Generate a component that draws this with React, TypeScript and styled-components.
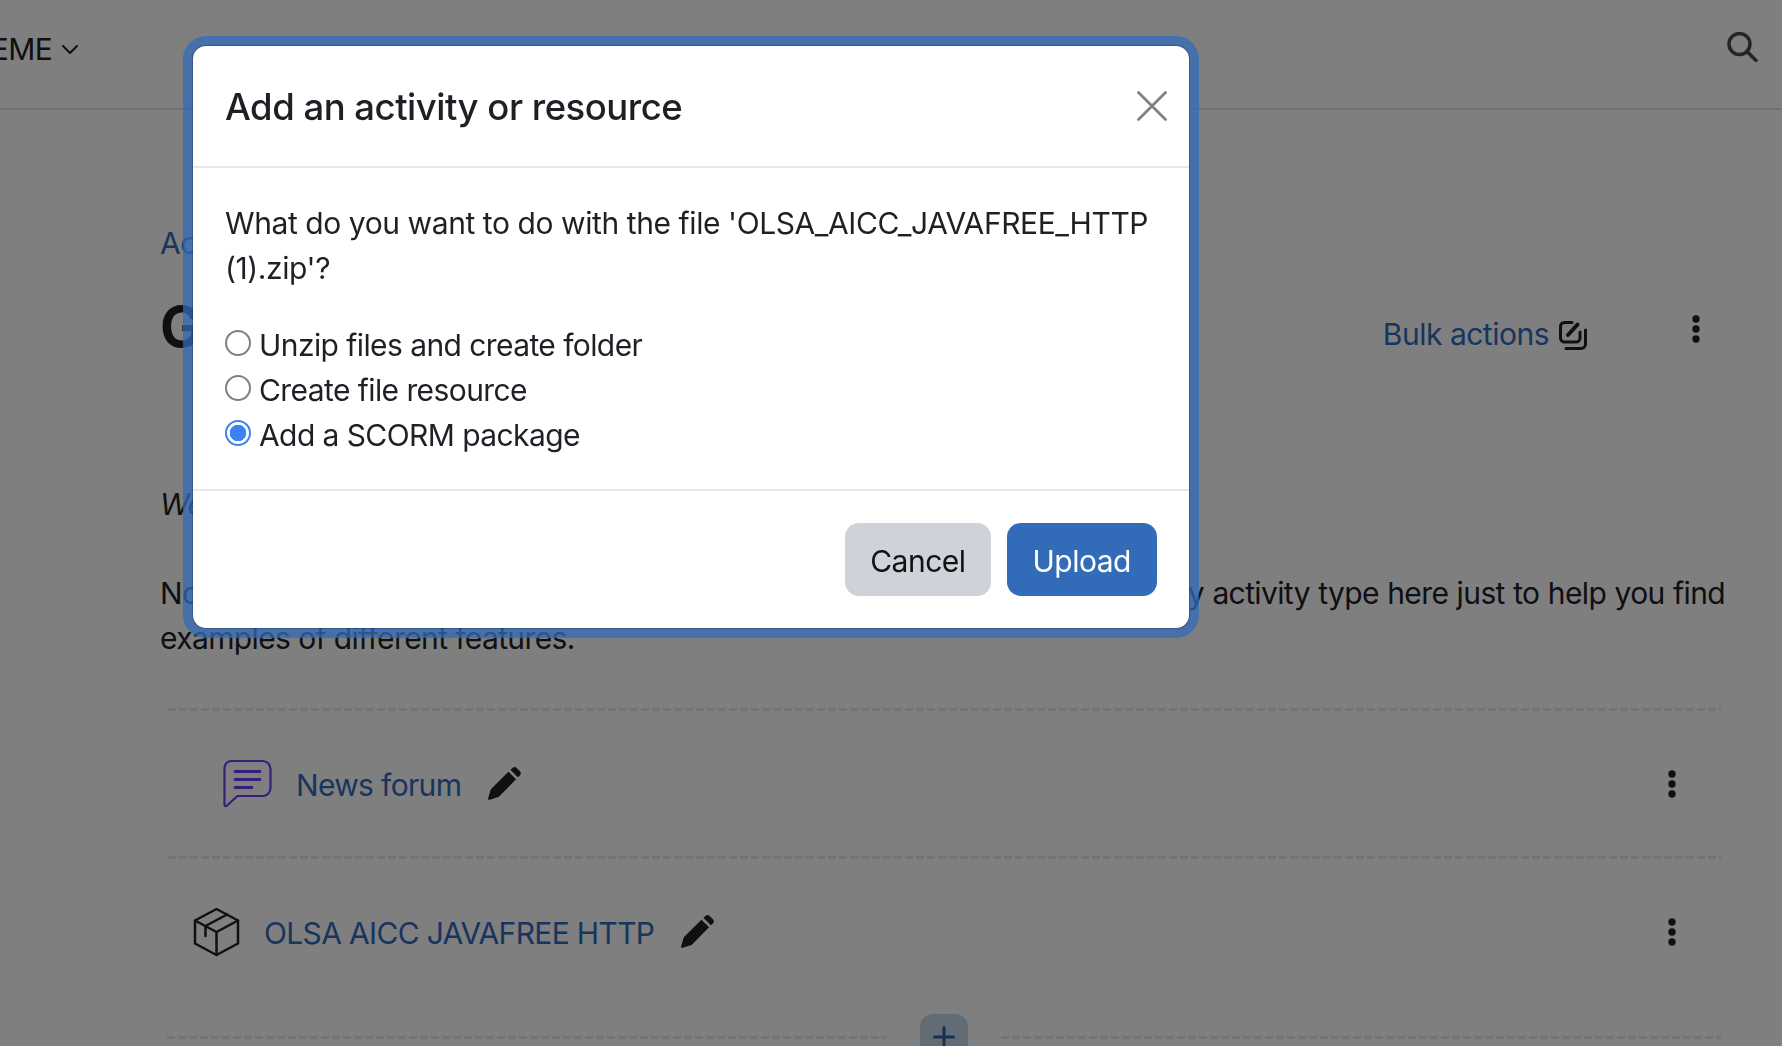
import { createGlobalStyle, styled } from "styled-components";

const GlobalStyle = createGlobalStyle`
  html, body {
    margin: 0;
    height: 1046px;
    overflow: hidden;
    background: #fff;
    font-family: Inter, "Liberation Sans", sans-serif;
    font-size: 30px;
    line-height: 45px;
    letter-spacing: -0.5px;
    color: #1d2125;
  }
`;

const linkColor = "#2f6bbd";

const options = [
  { id: "unzip", label: "Unzip files and create folder" },
  { id: "file", label: "Create file resource" },
  { id: "scorm", label: "Add a SCORM package", checked: true },
];

const KebabIcon = () => (
  <svg width="8" height="28" viewBox="0 0 8 28" fill="#1d2125">
    <circle cx="4" cy="4" r="3.7" />
    <circle cx="4" cy="14" r="3.7" />
    <circle cx="4" cy="24" r="3.7" />
  </svg>
);

const PencilIcon = () => (
  <svg width="34" height="34" viewBox="0 0 24 24" fill="#1d2125">
    <path d="M1 23c-.3-.2-.3-.5-.2-1l1.900-6.300L15.100 3.300l5.400 5.400L8.200 21.100 1.900 23.100c-.4.100-.7.100-.9-.1z" />
    <path d="M16.500 2 17.800.8a2.400 2.400 0 0 1 3.300 0l2 2a2.400 2.400 0 0 1 0 3.300L21.800 7.300z" />
  </svg>
);

const ForumIcon = () => (
  <svg width="49" height="49" viewBox="0 0 49 49" fill="none" stroke="#6f3df0" strokeWidth="2.200" strokeLinecap="round" strokeLinejoin="round">
    <path d="M1.500 9a7 7 0 0 1 7-7h31a8 8 0 0 1 8 8v19a8 8 0 0 1-8 8H14.500L3.500 47c-1 .6-2 0-2-1.200z" />
    <path d="M12 12.500h25M12 20.500h25M12 28.500h17" strokeWidth="2.800" />
  </svg>
);

const PackageIcon = () => (
  <svg width="47" height="50" viewBox="0 0 47 50" fill="none" stroke="#1d2125" strokeWidth="2.500" strokeLinecap="round" strokeLinejoin="round">
    <path d="M23.500 2 45 13.500v23L23.500 48 2 36.500v-23z" />
    <path d="M2 13.500 23.500 25 45 13.500M23.500 25v23" />
    <path d="M34 7.500 12.500 19v10" />
  </svg>
);

const BulkIcon = () => (
  <svg width="30" height="30" viewBox="0 0 30 30" fill="none" stroke="#1d2125" strokeWidth="3" strokeLinecap="round" strokeLinejoin="round">
    <path d="M14 2.500H6.500a4 4 0 0 0-4 4V18a4 4 0 0 0 4 4H18a4 4 0 0 0 4-4v-6" />
    <path d="M27.500 10v14a4.500 4.500 0 0 1-4.500 4.500H8" />
    <path d="M10 15 19.500 4.500" strokeWidth="4" />
  </svg>
);

const App = () => {
  return (
    <>
      <GlobalStyle />
      <Page>
        <Navbar>
          <ThemeMenu>
            THEME
            <svg width="16" height="9" viewBox="0 0 16 9" fill="none" stroke="#1d2125" strokeWidth="2" strokeLinecap="round" strokeLinejoin="round">
              <path d="M1 1l7 7 7-7" />
            </svg>
          </ThemeMenu>
          <svg width="31" height="30" viewBox="0 0 31 30" fill="none" stroke="#4a4a4a" strokeWidth="3.500" strokeLinecap="round">
            <circle cx="12.500" cy="12" r="10.500" />
            <path d="M20.500 20l8.500 8.500" />
          </svg>
        </Navbar>
        <Content>
          <Breadcrumb>Activities</Breadcrumb>
          <HeadingRow>
            <Heading>General</Heading>
            <BulkLink>
              Bulk actions
              <BulkIcon />
            </BulkLink>
            <HeadingKebab>
              <KebabIcon />
            </HeadingKebab>
          </HeadingRow>
          <Welcome>Welcome to the course and thanks for joining us.</Welcome>
          <Intro>
            Note that this course is only a sample for teachers and so we have put every activity type here just to help you find
            examples of different features.
          </Intro>
          <ActivityList>
            <DashedLine />
            <ActivityRow $indent={55} $extra={0}>
              <ForumIcon />
              <ActivityLink>News forum</ActivityLink>
              <PencilIcon />
              <RowKebab>
                <KebabIcon />
              </RowKebab>
            </ActivityRow>
            <DashedLine />
            <ActivityRow $indent={25} $extra={32}>
              <PackageIcon />
              <ActivityLink>OLSA AICC JAVAFREE HTTP</ActivityLink>
              <PencilIcon />
              <RowKebab>
                <KebabIcon />
              </RowKebab>
            </ActivityRow>
            <AddRow>
              <DashedLine />
              <AddButton>
                <svg width="22" height="22" viewBox="0 0 22 22" stroke="#2f5fa8" strokeWidth="3" strokeLinecap="round">
                  <path d="M11 1.500v19M1.500 11h19" />
                </svg>
              </AddButton>
              <DashedLine />
            </AddRow>
          </ActivityList>
        </Content>
      </Page>
      <Backdrop />
      <Modal>
        <ModalHeader>
          <ModalTitle>Add an activity or resource</ModalTitle>
          <CloseButton aria-label="Close">
            <svg width="30" height="30" viewBox="0 0 30 30" stroke="#808080" strokeWidth="2.800" strokeLinecap="round">
              <path d="M1.500 1.500l27 27M28.500 1.500l-27 27" />
            </svg>
          </CloseButton>
        </ModalHeader>
        <ModalBody>
          <Question>What do you want to do with the file 'OLSA_AICC_JAVAFREE_HTTP (1).zip'?</Question>
          <OptionList>
            {options.map((option) => (
              <OptionLabel key={option.id}>
                <Radio type="radio" name="action" defaultChecked={option.checked} />
                {option.label}
              </OptionLabel>
            ))}
          </OptionList>
        </ModalBody>
        <ModalFooter>
          <FooterButton $primary={false}>Cancel</FooterButton>
          <FooterButton $primary={true}>Upload</FooterButton>
        </ModalFooter>
      </Modal>
    </>
  );
};

export default App;

const Page = styled.div`
  width: 1782px;
  height: 1046px;
  overflow: hidden;
`;

const Navbar = styled.header`
  height: 108px;
  box-sizing: content-box;
  padding: 0 24px 0 0;
  display: flex;
  align-items: center;
  justify-content: space-between;
  border-bottom: 2px solid #dee2e6;

  > svg {
    margin-bottom: 14px;
  }
`;

const ThemeMenu = styled.div`
  margin: 0 0 10px -50px;
  display: flex;
  align-items: center;
  gap: 10px;
`;

const Content = styled.main`
  width: 1568px;
  margin-left: 160px;
  padding-top: 111px;
`;

const Breadcrumb = styled.div`
  color: ${linkColor};
`;

const HeadingRow = styled.div`
  margin-top: 28px;
  padding-right: 28px;
  display: flex;
  align-items: flex-start;
`;

const Heading = styled.h1`
  margin: 0 auto 0 0;
  font-size: 56px;
  line-height: 67px;
  font-weight: 700;
`;

const BulkLink = styled.div`
  margin-top: 18px;
  display: flex;
  align-items: center;
  gap: 9px;
  color: ${linkColor};
`;

const HeadingKebab = styled.div`
  margin: 21px 0 0 104px;
  display: flex;
`;

const Welcome = styled.p`
  margin: 121px 0 0;
  font-style: italic;
`;

const Intro = styled.p`
  margin: 44px 0 0;
  padding-right: 3px;
  letter-spacing: -0.62px;
  text-align: justify;
`;

const ActivityList = styled.div`
  margin-top: 47px;
  padding: 0 7px 0 8px;
`;

const DashedLine = styled.div`
  flex: 1;
  height: 3px;
  background: repeating-linear-gradient(to right, #e8e8e8 0 8px, transparent 8px 11px);
`;

const ActivityRow = styled.div<{ $indent: number; $extra: number }>`
  height: 145px;
  padding: 0 45px ${(props) => props.$extra}px ${(props) => props.$indent}px;
  display: flex;
  align-items: center;
`;

const ActivityLink = styled.span`
  margin: 4px 26px 0 24px;
  letter-spacing: -0.66px;
  color: ${linkColor};
`;

const RowKebab = styled.div`
  margin-left: auto;
  display: flex;
`;

const AddRow = styled.div`
  margin-left: -1px;
  display: flex;
  align-items: flex-start;
  gap: 33px;
`;

const AddButton = styled.div`
  width: 48px;
  height: 60px;
  margin-top: -22px;
  padding-top: 12px;
  box-sizing: border-box;
  border-radius: 13px;
  background: #c4d8ea;
  display: flex;
  justify-content: center;
  align-items: flex-start;
`;

const Backdrop = styled.div`
  position: fixed;
  inset: 0;
  background: rgba(0, 0, 0, 0.5);
`;

const Modal = styled.section`
  position: fixed;
  left: 192px;
  top: 45px;
  width: 998px;
  height: 584px;
  box-sizing: border-box;
  display: flex;
  flex-direction: column;
  background: #fff;
  background-clip: padding-box;
  border: 1px solid rgba(0, 0, 0, 0.2);
  border-radius: 14px;
  box-shadow: 0 0 0 9px rgba(50, 107, 184, 0.75);
`;

const ModalHeader = styled.div`
  height: 122px;
  box-sizing: border-box;
  padding: 1px 22px 0 32px;
  display: flex;
  align-items: center;
  justify-content: space-between;
  border-bottom: 2px solid #e4e8ec;
`;

const ModalTitle = styled.h2`
  margin: 0;
  font-size: 36.5px;
  line-height: 42px;
  font-weight: 500;
`;

const CloseButton = styled.button`
  margin-top: -2px;
  padding: 0;
  border: 0;
  background: none;
  display: flex;
`;

const ModalBody = styled.div`
  padding: 33px 32px 0;
  height: 323px;
  box-sizing: border-box;
  border-bottom: 2px solid #e4e8ec;
`;

const Question = styled.p`
  margin: 0;
  letter-spacing: -0.42px;
`;

const OptionList = styled.div`
  margin-top: 32px;
  display: flex;
  flex-direction: column;
  letter-spacing: -0.58px;
`;

const OptionLabel = styled.label`
  display: flex;
  align-items: center;
  gap: 8px;
`;

const Radio = styled.input`
  appearance: none;
  width: 26px;
  height: 26px;
  margin: -6px 0 0;
  box-sizing: border-box;
  border: 2px solid #808080;
  border-radius: 50%;
  background: #fff;

  &:checked {
    border-color: #3b82f6;
    background: radial-gradient(circle, #3b82f6 0 8px, #fff 8.500px);
  }
`;

const ModalFooter = styled.div`
  flex: 1;
  padding: 0 32px 32px;
  display: flex;
  justify-content: flex-end;
  align-items: flex-end;
  gap: 16px;
`;

const FooterButton = styled.button<{ $primary: boolean }>`
  height: 73px;
  padding: 3px ${(props) => (props.$primary ? "26px" : "25px")} 0;
  border: 0;
  border-radius: 14px;
  font: inherit;
  letter-spacing: inherit;
  background: ${(props) => (props.$primary ? "#326bb8" : "#ced2d9")};
  color: ${(props) => (props.$primary ? "#fff" : "#111")};
`;
